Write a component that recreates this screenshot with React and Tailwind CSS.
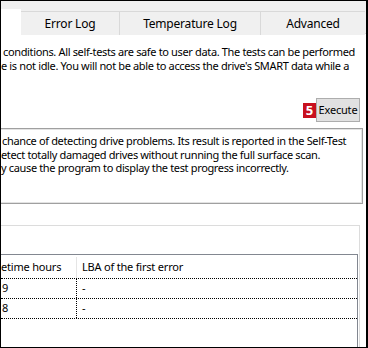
import React from "react";

const font = { fontFamily: '"Noto Sans", "Open Sans", sans-serif' };

const Tab = ({ label, className }) => (
  <div
    className={`h-[24px] mt-[10px] flex items-center justify-center border-t border-r border-[#d9d9d9] bg-[#f0f0f0] text-[12px] tracking-[-0.2px] text-black ${className}`}
  >
    {label}
  </div>
);

const App = () => {
  return (
    <div
      className="w-[368px] h-[348px] overflow-hidden bg-white border-t border-l border-b border-r-2 border-black flex flex-col text-black"
      style={font}
    >
      {/* tab strip */}
      <div className="h-[33px] bg-[#f0f0f0] flex shrink-0 border-b border-[#d9d9d9]">
        <div className="w-[20px] mt-[8px] h-[25px] bg-white -mb-px"></div>
        <Tab label="Error Log" className="w-[99px]" />
        <Tab label="Temperature Log" className="w-[141px]" />
        <Tab label="Advanced" className="w-[104px] border-r-0" />
      </div>

      {/* description */}
      <div className="pt-[11px] pl-[2px] text-[11px] leading-[14px] whitespace-nowrap tracking-[-0.35px]">
        <div>conditions. All self-tests are safe to user data. The tests can be performed</div>
        <div className="-ml-[2px]">e is not idle. You will not be able to access the drive's SMART data while a</div>
      </div>

      {/* execute */}
      <div className="flex justify-end items-center mt-[25px] pr-[6px]">
        <span className="w-[13px] h-[15px] bg-[#c8101e] text-white font-bold text-[13px] leading-[15px] flex items-center justify-center">
          5
        </span>
        <button className="w-[44px] h-[24px] bg-[#e1e1e1] border border-[#adadad] text-[11px] leading-[22px] text-black flex items-center justify-center tracking-[-0.2px]">
          Execute
        </button>
      </div>

      {/* text box */}
      <div className="mt-[6px] h-[76px] w-[362px] border border-l-0 border-[#a0a0a0] shrink-0">
        <div className="h-full border border-l-0 border-[#e3e3e3] pt-[4px] text-[11px] leading-[13.5px] whitespace-nowrap tracking-[-0.35px]">
          <div className="pl-[1px]">chance of detecting drive problems. Its result is reported in the Self-Test</div>
          <div>etect totally damaged drives without running the full surface scan.</div>
          <div>y cause the program to display the test progress incorrectly.</div>
        </div>
      </div>

      {/* group box */}
      <div className="mt-[21px] w-[359px] flex-1 border-t border-r border-[#dcdcdc] pt-[28px]">
        <div className="w-[357px] h-full border-t border-r border-[#828790] text-[11px] tracking-[-0.2px]">
          <div className="h-[23px] flex items-center pt-[2px]">
            <div className="w-[76px] border-r border-[#e5e5e5] h-full flex items-center">
              etime hours
            </div>
            <div className="pl-[5px]">LBA of the first error</div>
          </div>
          {["9", "8"].map((v) => (
            <div key={v} className="h-[20px] flex border-t border-dotted border-black">
              <div className="w-[76px] border-r border-dotted border-black flex items-center pl-[1px]">{v}</div>
              <div className="pl-[5px] flex items-center">-</div>
            </div>
          ))}
          <div className="border-t border-dotted border-black"></div>
        </div>
      </div>
    </div>
  );
};

export default App;
